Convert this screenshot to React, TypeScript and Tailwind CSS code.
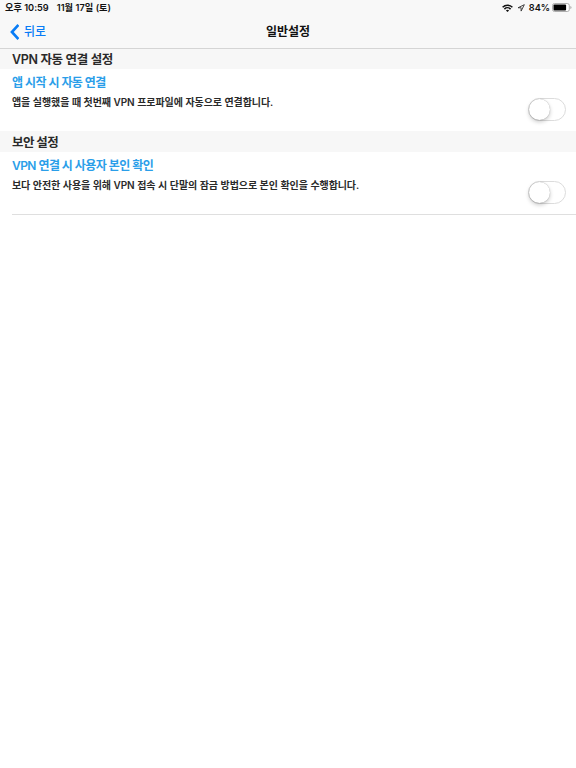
import { useState } from "react";

function Wifi() {
  return (
    <svg className="h-2 w-[11px]" viewBox="0 0 11 8" fill="none" stroke="#111" strokeWidth="1.5">
      <path d="M0.6 3.2a7 7 0 0 1 9.8 0" />
      <path d="M2.4 5.1a4.4 4.4 0 0 1 6.2 0" />
      <path d="M5.5 8 3.9 6.4a2.3 2.3 0 0 1 3.2 0z" fill="#111" stroke="none" />
    </svg>
  );
}

function Location() {
  return (
    <svg className="h-2 w-2" viewBox="0 0 7 7" fill="none" stroke="#333" strokeWidth="0.8">
      <path d="M6.4 0.6 0.9 3.3h2.7v2.9z" strokeLinejoin="round" />
    </svg>
  );
}

function Battery() {
  return (
    <svg className="h-[9px] w-5" viewBox="0 0 20 9">
      <rect x="0.5" y="0.5" width="16.8" height="8" rx="2" fill="#fff" stroke="#a5a5a5" strokeWidth="0.9" />
      <rect x="1.5" y="1.5" width="12.6" height="6" rx="0.9" fill="#000" />
      <path d="M18.4 3a1.6 1.6 0 0 1 0 3z" fill="#a5a5a5" />
    </svg>
  );
}

function Toggle({ label }: { label: string }) {
  const [on, setOn] = useState(false);

  return (
    <button
      role="switch"
      aria-checked={on}
      aria-label={label}
      onClick={() => setOn(!on)}
      className={`flex h-[23px] w-[38px] shrink-0 items-center rounded-full border ${
        on ? "justify-end border-[#4cd964] bg-[#4cd964]" : "justify-start border-[#dcdcdc] bg-white"
      }`}
    >
      <span className="h-[21px] w-[21px] rounded-full bg-white shadow-[0_2px_4px_rgba(0,0,0,0.22),0_0_1px_rgba(0,0,0,0.35)]" />
    </button>
  );
}

type SettingProps = {
  section: string;
  title: string;
  description: string;
  sectionClass: string;
};

function Setting({ section, title, description, sectionClass }: SettingProps) {
  return (
    <section>
      <h2
        className={`flex items-center bg-[#f7f7f7] pl-3 pt-[3px] text-[12.5px] font-semibold text-[#2a2a2a] ${sectionClass}`}
      >
        {section}
      </h2>
      <div className="flex h-[62px] justify-between pl-3 pr-2.5">
        <div className="pt-1">
          <h3 className="h-[19px] text-[12px] font-semibold leading-5 tracking-[-0.55px] text-[#2a9ee9]">{title}</h3>
          <p className="text-[10px] font-semibold leading-5 tracking-[-0.08px] [word-spacing:0.15px] text-[#2a2a2a]">
            {description}
          </p>
        </div>
        <div className="pt-[29px]">
          <Toggle label={title} />
        </div>
      </div>
    </section>
  );
}

export default function App() {
  return (
    <main className="h-[768px] w-full overflow-hidden whitespace-nowrap bg-white font-['Inter','Noto_Sans_CJK_KR',sans-serif] font-medium">
      <header className="h-[49px] border-b border-[#d5d5d5] bg-[#f8f8f8]">
        <div className="flex h-4 items-center justify-between pl-[5px] pr-1 text-[9.2px] font-semibold text-[#111]">
          <div className="flex gap-2">
            <span>오후 10:59</span>
            <span className="tracking-[0.05px]">11월 17일 (토)</span>
          </div>
          <div className="flex items-center">
            <Wifi />
            <span className="ml-1 flex">
              <Location />
            </span>
            <span className="ml-1 mr-0.5">84%</span>
            <Battery />
          </div>
        </div>
        <div className="grid h-8 grid-cols-3 items-center">
          <button className="flex items-center gap-[5px] pl-2.5 text-[12px] text-[#087cf6]">
            <svg className="h-4 w-[9px]" viewBox="0 0 9 16" fill="none" stroke="currentColor" strokeWidth="2.6">
              <path d="M8.4 0.9 1.9 8l6.5 7.1" />
            </svg>
            뒤로
          </button>
          <h1 className="text-center text-[12px] font-semibold text-[#111]">일반설정</h1>
        </div>
      </header>

      <Setting
        section="VPN 자동 연결 설정"
        title="앱 시작 시 자동 연결"
        description="앱을 실행했을 때 첫번째 VPN 프로파일에 자동으로 연결합니다."
        sectionClass="h-5 tracking-[-0.34px]"
      />
      <Setting
        section="보안 설정"
        title="VPN 연결 시 사용자 본인 확인"
        description="보다 안전한 사용을 위해 VPN 접속 시 단말의 잠금 방법으로 본인 확인을 수행합니다."
        sectionClass="h-[21px] tracking-[-0.6px]"
      />
      <div className="ml-3 border-t border-[#dfdfdf]" />
    </main>
  );
}
